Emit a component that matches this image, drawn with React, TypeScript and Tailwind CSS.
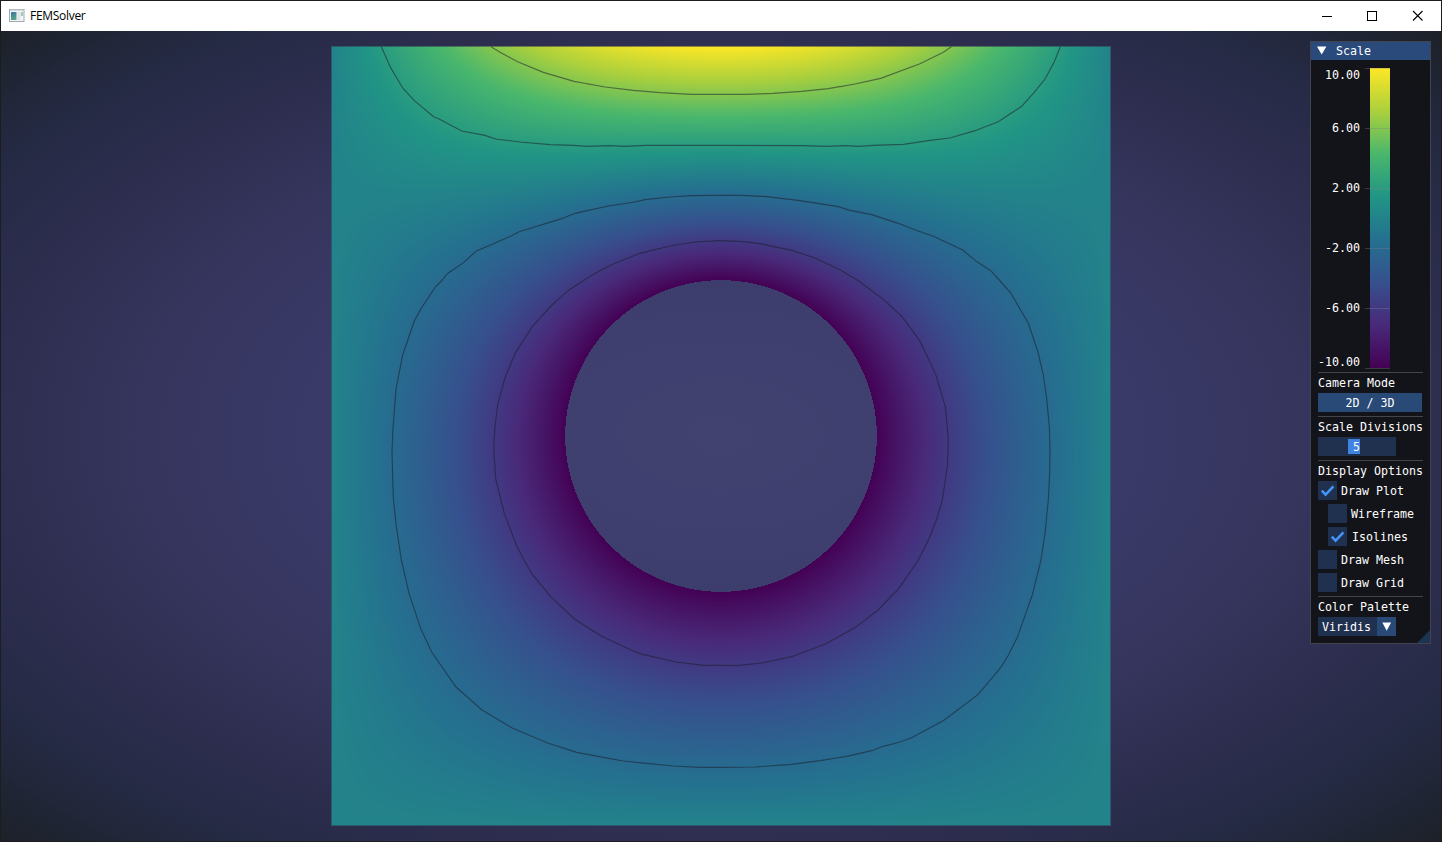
import { useLayoutEffect, useRef, type ReactNode } from "react";

const PLATE = 780;
const HOLE = 0.2;
const MODES = 26;

const PALETTE: [number, number, number][] = [
  [68, 1, 84],
  [73, 41, 121],
  [54, 80, 142],
  [36, 113, 143],
  [33, 149, 133],
  [74, 183, 108],
  [172, 208, 60],
  [253, 231, 37],
];

const rgb = (c: number[]) => `rgb(${c.join(",")})`;

/** Radial part of mode n; every mode vanishes on the hole boundary. */
function radial(n: number, r: number) {
  if (n === 0) return Math.log(r / HOLE);
  return Math.pow(r / 0.6, n) - Math.pow(HOLE / 0.6, n) * Math.pow(HOLE / r, n);
}

/** Least-squares fit of the harmonic modes to the temperatures on the outer edges. */
function solveModes() {
  const a = Array.from({ length: MODES }, () => new Float64Array(MODES + 1));
  const row = new Float64Array(MODES);
  const add = (x: number, y: number, u: number) => {
    const r = Math.hypot(x, y);
    const phi = Math.atan2(x, y);
    for (let n = 0; n < MODES; n++) row[n] = radial(n, r) * Math.cos(n * phi);
    for (let i = 0; i < MODES; i++) {
      for (let j = 0; j < MODES; j++) a[i][j] += row[i] * row[j];
      a[i][MODES] += row[i] * (u + 10);
    }
  };
  const count = 200;
  for (let k = 0; k < count; k++) {
    const t = (k + 0.5) / count;
    add(t / 2, 0.5, 10 * Math.cos((Math.PI * t) / 2));
    add(t / 2, -0.5, 0);
    add(0.5, t - 0.5, 0);
    add(0.5, t - 0.5, 0);
  }
  for (let c = 0; c < MODES; c++) {
    let p = c;
    for (let r = c + 1; r < MODES; r++) if (Math.abs(a[r][c]) > Math.abs(a[p][c])) p = r;
    [a[c], a[p]] = [a[p], a[c]];
    for (let r = c + 1; r < MODES; r++) {
      const f = a[r][c] / a[c][c];
      for (let k = c; k <= MODES; k++) a[r][k] -= f * a[c][k];
    }
  }
  const out = new Float64Array(MODES);
  for (let i = MODES - 1; i >= 0; i--) {
    let s = a[i][MODES];
    for (let k = i + 1; k < MODES; k++) s -= a[i][k] * out[k];
    out[i] = s / a[i][i];
  }
  return out;
}

function paintField(canvas: HTMLCanvasElement) {
  const ctx = canvas.getContext("2d");
  if (!ctx) return;
  const c = solveModes();
  const image = ctx.createImageData(PLATE, PLATE);
  const put = (px: number, py: number, col: number[]) => {
    const o = (py * PLATE + px) * 4;
    image.data[o] = col[0];
    image.data[o + 1] = col[1];
    image.data[o + 2] = col[2];
    image.data[o + 3] = 255;
  };
  const scale = 779;
  for (let py = 0; py < PLATE; py++) {
    const y = (PLATE / 2 - py - 0.5) / scale;
    for (let px = PLATE / 2; px < PLATE; px++) {
      const x = (px + 0.5 - PLATE / 2) / scale;
      const r2 = x * x + y * y;
      if (r2 < HOLE * HOLE) continue;
      const stepX = x / 0.6;
      const stepY = y / 0.6;
      const k = (HOLE * HOLE) / r2;
      let re = 1;
      let im = 0;
      let q = 1;
      let u = -10 + c[0] * 0.5 * Math.log(r2 / (HOLE * HOLE));
      for (let n = 1; n < MODES; n++) {
        const next = re * stepY - im * stepX;
        im = re * stepX + im * stepY;
        re = next;
        q *= k;
        u += c[n] * re * (1 - q);
      }
      const t = Math.min(1, Math.max(0, (u + 10) / 20)) * (PALETTE.length - 1);
      const i = Math.min(PALETTE.length - 2, Math.floor(t));
      const f = t - i;
      const col = [0, 1, 2].map((m) => Math.round(PALETTE[i][m] * (1 - f) + PALETTE[i + 1][m] * f));
      put(px, py, col);
      put(PLATE - 1 - px, py, col);
    }
  }
  ctx.putImageData(image, 0, 0);
}

/** Isolines per plot tile, in thirds of a pixel from the tile's origin. */
const ISOLINES: { x: number; y: number; lines: string[] }[] = [
  {
    x: -11,
    y: -16,
    lines: [
      "184,50 212,113 248,174 283,212 341,260 356,266 425,303 495,316 527,327 600,336 690,344 760,346 800,349 870,347 915,349 980,346 1200,346",
      "513,50 540,67 593,95 670,127 762,154 855,171 940,181 1020,188 1115,193 1200,193",
      "1200,496 1115,497 1050,501 975,509 945,516 865,528 765,550 725,566 597,605 572,619 468,664 430,698 382,731 367,750",
      "1200,632 1125,636 1050,648 960,670 880,702 828,728 793,750",
    ],
  },
  {
    x: 389,
    y: -16,
    lines: [
      "0,346 245,347 318,349 375,347 415,349 460,346 550,343 630,331 690,324 765,302 835,275 905,229 942,188 975,147 1003,95 1021,50",
      "0,193 80,193 160,190 245,184 325,176 405,162 482,145 600,101 670,67 694,50",
      "838,750 812,722 769,694 728,660 640,619 586,600 535,580 455,554 390,541 355,530 240,512 140,500 65,496 0,496",
      "412,750 400,743 360,719 285,684 215,661 120,641 70,635 0,632",
    ],
  },
  {
    x: -11,
    y: 234,
    lines: [
      "367,0 346,21 303,86 283,123 248,225 228,328 218,460 216,520 220,655 229,740 244,840",
      "793,0 748,29 696,75 638,138 587,217 555,293 533,375 525,440 521,500 527,597 553,700 590,797 612,840",
    ],
  },
  {
    x: -11,
    y: 514,
    lines: [
      "244,0 267,100 303,208 335,276 408,381 485,449 575,503 685,550 770,577 870,596 910,603 980,610 1060,618 1140,622 1200,622",
      "612,0 637,43 692,110 763,177 845,229 938,272 968,283 1068,306 1150,316 1200,316",
    ],
  },
  {
    x: 389,
    y: 234,
    lines: [
      "963,840 975,760 985,660 989,580 990,510 988,440 980,355 970,285 954,216 925,130 873,40 838,0",
      "595,840 627,776 648,723 667,660 682,560 685,480 676,380 647,283 599,182 546,110 490,58 412,0",
    ],
  },
  {
    x: 389,
    y: 514,
    lines: [
      "0,622 105,621 215,613 300,602 380,589 455,572 490,559 540,546 575,533 672,481 705,456 774,404 842,323 865,286 892,232 937,105 963,0",
      "0,316 50,317 125,309 215,290 315,253 408,201 433,182 474,150 536,86 549,67 595,0",
    ],
  },
];

function Plot() {
  const ref = useRef<HTMLCanvasElement>(null);
  useLayoutEffect(() => {
    if (ref.current) paintField(ref.current);
  }, []);
  return (
    <div className="relative mx-auto h-[780px] w-[780px]">
      <canvas ref={ref} width={PLATE} height={PLATE} className="block" />
      <svg className="absolute inset-0" width="780" height="780" fill="none" stroke="#1a1a26" strokeOpacity="0.52">
        <rect x="0.5" y="0.5" width="779" height="779" stroke="#353555" strokeOpacity="0.55" />
        {ISOLINES.map((tile, i) => (
          <g key={i} transform={`translate(${tile.x} ${tile.y}) scale(0.33333)`}>
            {tile.lines.map((points) => (
              <polyline key={points} points={points} vectorEffect="non-scaling-stroke" strokeWidth="1.15" />
            ))}
          </g>
        ))}
      </svg>
    </div>
  );
}

function TitleBar() {
  return (
    <header className="flex h-[30px] items-center bg-white pr-[18px] pl-2">
      <svg width="16" height="16" viewBox="0 0 16 16" className="-mt-px">
        <defs>
          <linearGradient id="app" x1="0" y1="0" x2="0.4" y2="1">
            <stop offset="0" stopColor="#3f74a8" />
            <stop offset="1" stopColor="#55a583" />
          </linearGradient>
        </defs>
        <rect x="0.5" y="1.5" width="14.5" height="12" fill="#f4f5f7" stroke="#a3a8ae" />
        <rect x="1" y="1" width="13.5" height="1.6" fill="#b9bdc3" />
        <rect x="2" y="4" width="5.5" height="8" fill="url(#app)" />
        <rect x="8.5" y="4" width="3" height="8" fill="#dfe2e6" />
        <rect x="12" y="4" width="2" height="4" fill="#9fc9b4" />
      </svg>
      <h1 className="ml-[5px] flex-1 font-['Open_Sans','Noto_Sans',sans-serif] text-[12px] leading-4 tracking-[-0.3px] text-black">
        FEMSolver
      </h1>
      <svg width="102" height="12" viewBox="0 0 102 12" fill="none" stroke="#000" className="-mt-px">
        <path d="M1 6.5h10M46.5 1.5h9v9h-9z" shapeRendering="crispEdges" />
        <path d="M92 1l9.5 9.5M101.5 1L92 10.5" strokeWidth="1.1" />
      </svg>
    </header>
  );
}

const Separator = () => <div className="my-1 h-px w-[105px] bg-[#43434d]" />;

const Label = ({ children }: { children: ReactNode }) => (
  <div className="mb-[3px] h-[13px] leading-3">{children}</div>
);

function Check({ label, on, className = "" }: { label: string; on?: boolean; className?: string }) {
  return (
    <div className={`flex h-[19px] items-center ${className}`}>
      <span className="h-[19px] w-[19px] shrink-0 bg-[#20304f]">
        {on && (
          <svg width="19" height="19" fill="none" stroke="#4296fa" strokeWidth="2.5">
            <path d="M3.8 9.6L7.6 13.6L15.4 5.4" />
          </svg>
        )}
      </span>
      <span>{label}</span>
    </div>
  );
}

const TICKS = [
  { label: "10.00", gap: "h-[60px]", text: "top-0" },
  { label: "6.00", gap: "h-[60px]", text: "-top-[7px]" },
  { label: "2.00", gap: "h-[60px]", text: "-top-[7px]" },
  { label: "-2.00", gap: "h-[60px]", text: "-top-[7px]" },
  { label: "-6.00", gap: "h-[60px]", text: "-top-[7px]" },
  { label: "-10.00", gap: "h-px", text: "-top-[13px]" },
];

function ScaleBar() {
  const stops = [...PALETTE].reverse().map(rgb).join(",");
  return (
    <div className="relative h-[300px]">
      <div className="ml-[52px] h-[300px] w-5" style={{ backgroundImage: `linear-gradient(${stops})` }} />
      <div className="absolute top-0 left-0">
        {TICKS.map((t) => (
          <div key={t.label} className={`flex ${t.gap}`}>
            <span className={`relative w-[42px] text-right ${t.text}`}>{t.label}</span>
            <span className="ml-[5px] h-px w-[25px] bg-[#80808c]/35" />
          </div>
        ))}
      </div>
    </div>
  );
}

function ScalePanel() {
  return (
    <aside className="absolute top-[40px] right-[10px] flex h-[603px] w-[121px] flex-col border border-[#43434f] bg-[#131418]/97 font-['DejaVu_Sans_Mono',monospace] text-[11.63px] leading-[14px] whitespace-pre text-white">
      <div className="flex h-[18px] shrink-0 items-center bg-[#294a7a]">
        <svg width="10" height="9" className="-mt-px ml-[6px]">
          <path d="M0 0.5h9.4L4.7 8.5z" fill="#fff" />
        </svg>
        <span className="ml-[9px]">Scale</span>
      </div>
      <div className="px-[7px] pt-2">
        <ScaleBar />
        <Separator />
        <Label>Camera Mode</Label>
        <button className="block h-[19px] w-[104px] bg-[#294a76] text-center leading-[20px]">2D / 3D</button>
        <Separator />
        <Label>Scale Divisions</Label>
        <div className="flex h-[19px] w-[78px] justify-center bg-[#20304f] py-[2px]">
          <span className="ml-[-6px] h-[15px] w-3 bg-[#4083e0] text-right leading-4">5</span>
        </div>
        <Separator />
        <Label>Display Options</Label>
        <div className="flex flex-col gap-1">
          <Check label="Draw Plot" on className="gap-1" />
          <Check label="Wireframe" className="ml-[10px] gap-1" />
          <Check label="Isolines" on className="ml-[10px] gap-[5px]" />
          <Check label="Draw Mesh" className="gap-1" />
          <Check label="Draw Grid" className="gap-1" />
        </div>
        <Separator />
        <Label>Color Palette</Label>
        <div className="flex h-[19px] w-[78px] items-center bg-[#20304f] pl-1">
          <span className="flex-1">Viridis</span>
          <span className="flex h-[19px] w-[19px] items-center justify-center bg-[#294a76]">
            <svg width="10" height="9">
              <path d="M0.3 0.5h8.8L4.7 8.8z" fill="#fff" />
            </svg>
          </span>
        </div>
      </div>
      <svg width="13" height="13" className="absolute right-0 bottom-0">
        <path d="M13 0v13H0z" fill="#1c3352" />
      </svg>
    </aside>
  );
}

export default function App() {
  return (
    <div className="relative flex h-[842px] w-[1442px] flex-col overflow-hidden border border-[#1d1d1f]">
      <TitleBar />
      <main className="flex-1 bg-[radial-gradient(ellipse_farthest-corner_at_50%_50%,#424271_0%,#3f3f6f_20%,#3a3a69_40%,#34345b_60%,#2e2e50_71%,#252a44_85%,#1c2129_100%)] pt-[15px]">
        <Plot />
      </main>
      <ScalePanel />
    </div>
  );
}
